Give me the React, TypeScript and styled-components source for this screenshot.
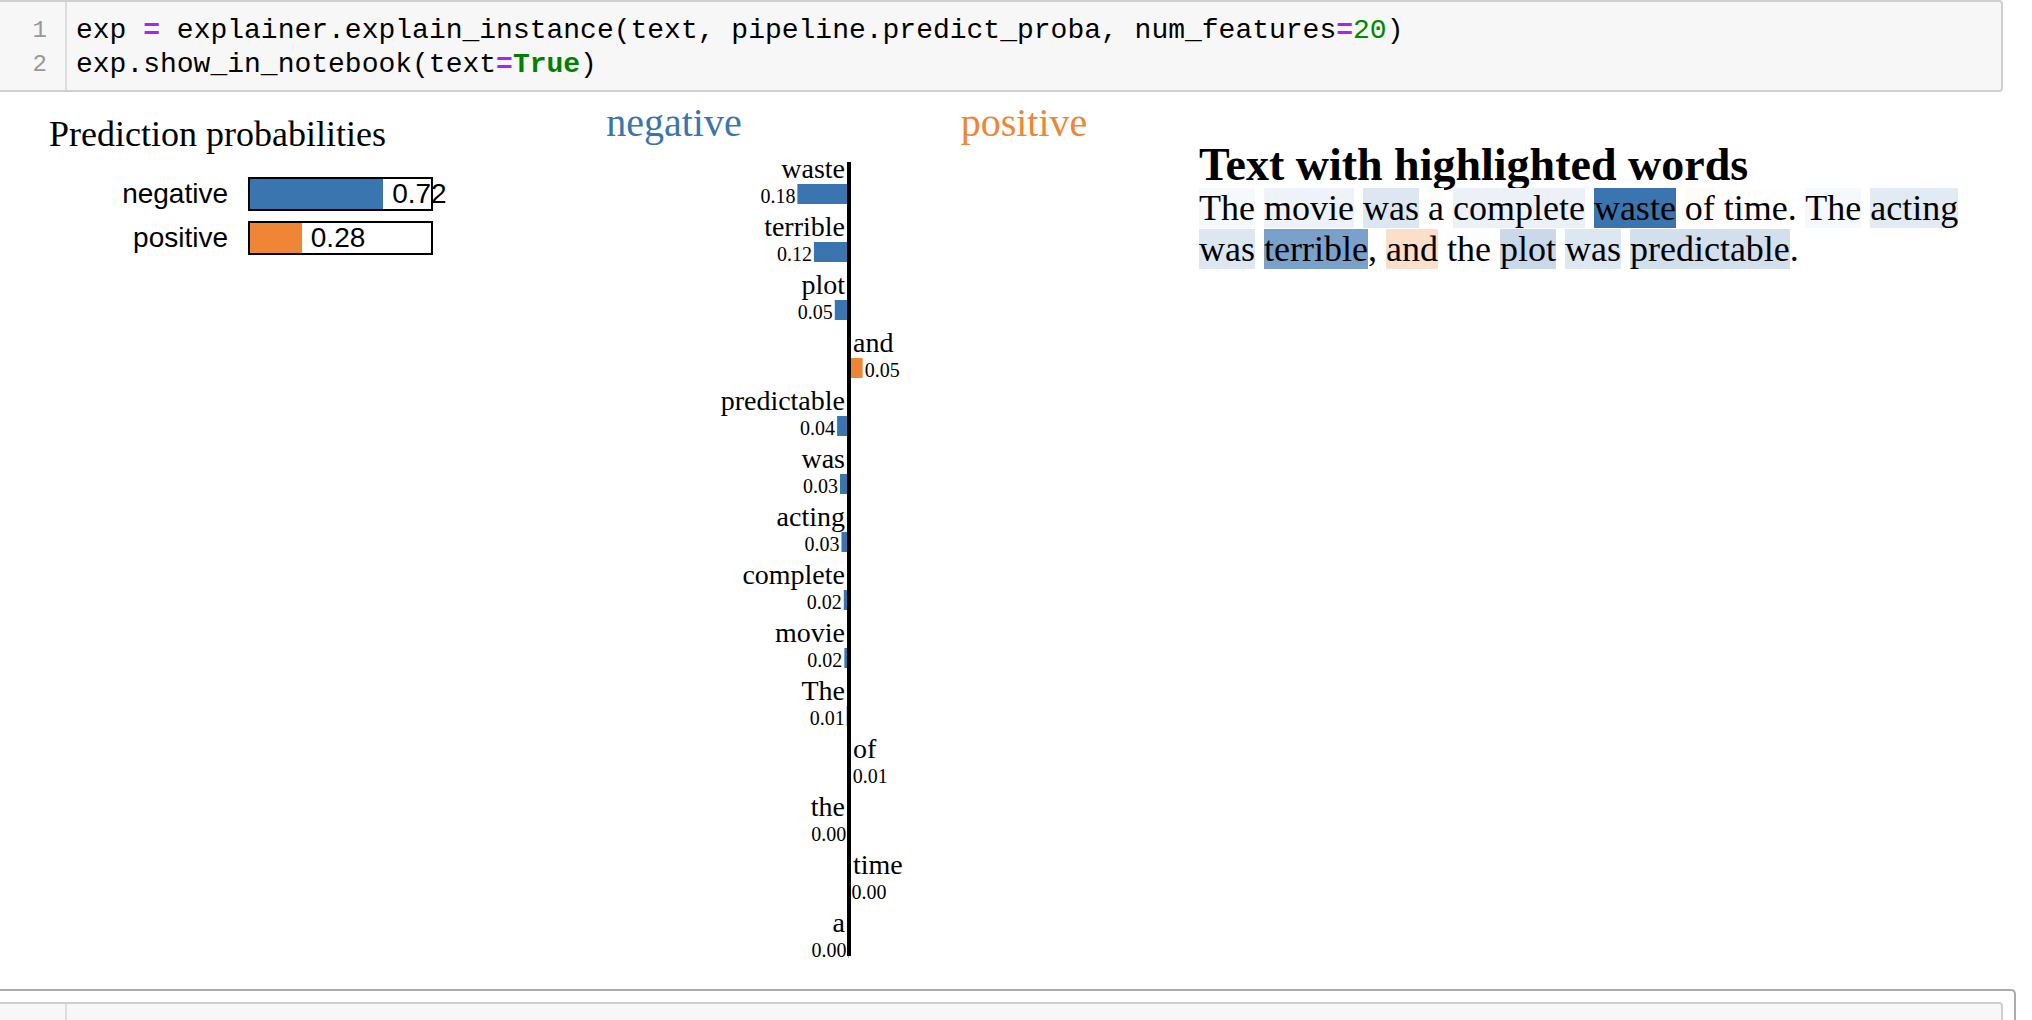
import React from 'react'
import styled, { createGlobalStyle } from 'styled-components'

const BLUE: [number, number, number] = [59, 117, 175]
const ORANGE: [number, number, number] = [238, 134, 54]
const rgb = (c: number[]) => `rgb(${c[0]}, ${c[1]}, ${c[2]})`
const tint = (c: number[], a: number) =>
  rgb(c.map(v => Math.round(255 - (255 - v) * a)))

const MAX_WEIGHT = 0.178

const probas: [string, number, number[]][] = [
  ['negative', 0.72, BLUE],
  ['positive', 0.28, ORANGE],
]

const features: [string, number][] = [
  ['waste', -0.178],
  ['terrible', -0.121],
  ['plot', -0.049],
  ['and', 0.047],
  ['predictable', -0.041],
  ['was', -0.031],
  ['acting', -0.026],
  ['complete', -0.018],
  ['movie', -0.016],
  ['The', -0.008],
  ['of', 0.006],
  ['the', -0.003],
  ['time', 0.002],
  ['a', -0.002],
]

// [text, weight or null for plain text]
const tokens: [string, number | null][] = [
  ['The', -0.008], [' ', null], ['movie', -0.016], [' ', null], ['was', -0.031], [' ', null],
  ['a', -0.002], [' ', null], ['complete', -0.018], [' ', null], ['waste', -0.178], [' ', null],
  ['of', 0.006], [' ', null], ['time', 0.002], ['. ', null], ['The', -0.008], [' ', null],
  ['acting', -0.026], [' ', null], ['was', -0.031], [' ', null], ['terrible', -0.121], [', ', null],
  ['and', 0.047], [' ', null], ['the', -0.003], [' ', null], ['plot', -0.049], [' ', null],
  ['was', -0.031], [' ', null], ['predictable', -0.041], ['.', null],
]

const GlobalStyle = createGlobalStyle`
  html, body {
    margin: 0;
    padding: 0;
    background: #fff;
  }
  body {
    width: 2032px;
    height: 1020px;
    overflow: hidden;
  }
`

const Page = styled.div`
  width: 2032px;
  height: 1020px;
  overflow: hidden;
`

const InputArea = styled.div<{ $height?: number }>`
  width: 2003px;
  box-sizing: border-box;
  display: flex;
  background: #f7f7f7;
  border: 2px solid #cfcfcf;
  border-left: none;
  border-radius: 0 4px 4px 0;
  font-family: "Liberation Mono", monospace;
  ${p => (p.$height ? `height: ${p.$height}px;` : '')}
`

const Gutter = styled.div`
  width: 67px;
  flex: none;
  box-sizing: border-box;
  border-right: 2px solid #ddd;
  padding: 12px 18px 8px 0;
  text-align: right;
  color: #999;
  font-size: 24px;
  line-height: 34px;
`

const Code = styled.pre`
  margin: 0;
  padding: 12px 0 8px 9px;
  font-family: "Liberation Mono", monospace;
  font-size: 28px;
  line-height: 34px;
  color: #000;
`

const Op = styled.span`
  color: #aa22ff;
  font-weight: bold;
`

const Keyword = styled.span`
  color: #008000;
  font-weight: bold;
`

const Num = styled.span`
  color: #008800;
`

const Output = styled.div`
  height: 897px;
  display: flex;
  align-items: flex-start;
`

const ProbaPanel = styled.div`
  width: 499px;
  flex: none;
  box-sizing: border-box;
  padding-top: 22px;
`

const ProbaTitle = styled.div`
  margin-left: 49px;
  font-family: "Liberation Serif", serif;
  font-size: 36px;
  line-height: 40px;
  color: #000;
`

const ProbaRows = styled.div`
  margin-top: 23px;
  display: flex;
  flex-direction: column;
  gap: 10px;
`

const ProbaRow = styled.div`
  display: flex;
  align-items: center;
  gap: 20px;
`

const ProbaLabel = styled.div`
  width: 228px;
  text-align: right;
  font-family: "Liberation Sans", sans-serif;
  font-size: 28px;
  color: #000;
`

const ProbaBox = styled.div`
  width: 185px;
  height: 34px;
  box-sizing: border-box;
  border: 2px solid #000;
  display: flex;
  align-items: center;
`

const ProbaFill = styled.div<{ $color: string }>`
  height: 100%;
  flex: none;
  background: ${p => p.$color};
`

const ProbaValue = styled.span`
  margin-left: 9px;
  font-family: "Liberation Sans", sans-serif;
  font-size: 28px;
  line-height: 1;
  white-space: nowrap;
  color: #000;
`

const ChartPanel = styled.div`
  width: 700px;
  flex: none;
  font-family: "Liberation Serif", serif;
`

const TextPanel = styled.div`
  width: 790px;
  flex: none;
  padding-top: 50px;
  font-family: "Liberation Serif", serif;
  color: #000;
`

const TextTitle = styled.h3`
  margin: 0;
  font-size: 46px;
  line-height: 46px;
  font-weight: bold;
`

const TextBody = styled.div`
  font-size: 36px;
  line-height: 41px;
`

const Word = styled.span<{ $bg: string }>`
  background: ${p => p.$bg};
`

const NextCell = styled.div`
  width: 2016px;
  box-sizing: border-box;
  border-top: 2px solid #ababab;
  border-right: 2px solid #ababab;
  border-top-right-radius: 5px;
  padding: 11px 11px 0 0;
`

function FeatureChart() {
  const axis = 350
  const scale = 290
  return (
    <svg width={700} height={880}>
      <text x={175} y={44} fontSize={40} textAnchor="middle" fill={rgb(BLUE)}>negative</text>
      <text x={525} y={44} fontSize={40} textAnchor="middle" fill={rgb(ORANGE)}>positive</text>
      {features.map(([name, w], i) => {
        const size = Math.abs(w) * scale
        const right = w > 0
        const base = 86 + 58 * i
        return (
          <g key={i}>
            <text x={right ? axis + 4 : axis - 4} y={base} fontSize={28} textAnchor={right ? 'start' : 'end'}>
              {name}
            </text>
            <rect x={right ? axis : axis - size} y={base + 6} width={size} height={20} fill={rgb(right ? ORANGE : BLUE)} />
            <text
              x={right ? axis + size + 2 : axis - size - 2}
              y={base + 25}
              fontSize={20}
              textAnchor={right ? 'start' : 'end'}
            >
              {Math.abs(w).toFixed(2)}
            </text>
          </g>
        )
      })}
      <line x1={axis} x2={axis} y1={70} y2={86 + 58 * features.length - 34} stroke="#000" strokeWidth={4} />
    </svg>
  )
}

export default function App() {
  return (
    <Page>
      <GlobalStyle />
      <InputArea>
        <Gutter>
          <div>1</div>
          <div>2</div>
        </Gutter>
        <Code>
          exp <Op>=</Op> explainer.explain_instance(text, pipeline.predict_proba, num_features<Op>=</Op><Num>20</Num>){'\n'}
          exp.show_in_notebook(text<Op>=</Op><Keyword>True</Keyword>)
        </Code>
      </InputArea>

      <Output>
        <ProbaPanel>
          <ProbaTitle>Prediction probabilities</ProbaTitle>
          <ProbaRows>
            {probas.map(([label, p, color]) => (
              <ProbaRow key={label}>
                <ProbaLabel>{label}</ProbaLabel>
                <ProbaBox>
                  <ProbaFill $color={rgb(color)} style={{ width: p * 185 }} />
                  <ProbaValue>{p.toFixed(2)}</ProbaValue>
                </ProbaBox>
              </ProbaRow>
            ))}
          </ProbaRows>
        </ProbaPanel>

        <ChartPanel>
          <FeatureChart />
        </ChartPanel>

        <TextPanel>
          <TextTitle>Text with highlighted words</TextTitle>
          <TextBody>
            {tokens.map(([t, w], i) =>
              w === null ? (
                <React.Fragment key={i}>{t}</React.Fragment>
              ) : (
                <Word key={i} $bg={tint(w > 0 ? ORANGE : BLUE, Math.abs(w) / MAX_WEIGHT)}>{t}</Word>
              )
            )}
          </TextBody>
        </TextPanel>
      </Output>

      <NextCell>
        <InputArea $height={60}>
          <Gutter />
        </InputArea>
      </NextCell>
    </Page>
  )
}
